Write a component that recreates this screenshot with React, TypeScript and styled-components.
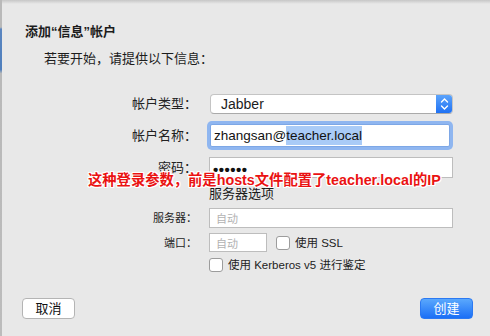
import React from "react";
import styled, { createGlobalStyle } from "styled-components";

const GlobalStyle = createGlobalStyle`
	html, body {
		margin: 0;
		padding: 0;
		background: #e8e8e8;
	}
	* {
		box-sizing: border-box;
	}
`;

const FONT = `"Liberation Sans", "Noto Sans CJK SC", sans-serif`;

const Sheet = styled.div`
	position: relative;
	width: 490px;
	height: 336px;
	overflow: hidden;
	background: #e8e8e8;
	font-family: ${FONT};
	color: #1c1c1c;
	border-left: 2px solid transparent;
	border-image: linear-gradient(to bottom, #b9b9b9 0px, #b9b9b9 28px, #5b86c0 30px, #4f7fbd 70px, #b9b9b9 74px, #bcbcbc 100%) 1;
	&::before {
		content: "";
		position: absolute;
		top: 0;
		left: 0;
		right: 0;
		height: 4px;
		background: linear-gradient(to bottom, #c6c6c6, #e8e8e8);
	}
`;

const Title = styled.h1`
	margin: 0;
	padding: 24px 0 0 23px;
	font-size: 13px;
	line-height: 16px;
	font-weight: 700;
`;

const Intro = styled.p`
	margin: 11px 0 0 42px;
	font-size: 13px;
	line-height: 16px;
`;

const Form = styled.div`
	display: flex;
	flex-direction: column;
	margin-top: 27px;
	padding-right: 37px;
`;

const Row = styled.div<{ $top?: number }>`
	display: grid;
	grid-template-columns: 195px 1fr;
	column-gap: 12px;
	align-items: center;
	margin-top: ${(p) => p.$top ?? 0}px;
`;

const Label = styled.span<{ $small?: boolean }>`
	text-align: right;
	font-size: ${(p) => (p.$small ? 11 : 13)}px;
	line-height: 16px;
	color: #222;
	white-space: nowrap;
`;

const Popup = styled.div`
	position: relative;
	display: flex;
	align-items: center;
	height: 20px;
	margin-left: 1px;
	padding-left: 10px;
	background: #fff;
	border: 1px solid #c4c4c4;
	border-bottom-color: #aaa;
	border-radius: 4px;
	font-size: 14px;
	overflow: hidden;
`;

const Stepper = styled.span`
	position: absolute;
	top: -1px;
	right: -1px;
	bottom: -1px;
	width: 17px;
	display: flex;
	align-items: center;
	justify-content: center;
	background: linear-gradient(to bottom, #5fa6fb, #1c6ff4);
	border-radius: 0 4px 4px 0;
`;

const Field = styled.div<{ $h: number; $w?: number; $focus?: boolean; $small?: boolean }>`
	display: flex;
	align-items: center;
	height: ${(p) => p.$h}px;
	width: ${(p) => (p.$w ? `${p.$w}px` : "auto")};
	margin-left: ${(p) => (p.$focus ? 1 : 0)}px;
	margin-right: ${(p) => (p.$focus ? 3 : 0)}px;
	padding-left: ${(p) => (p.$small ? 6 : 3)}px;
	background: #fff;
	border: 1px solid ${(p) => (p.$focus ? "#7da7e6" : "#bdbdbd")};
	box-shadow: ${(p) => (p.$focus ? "0 0 0 3px #8fb6f0" : "none")};
	border-radius: ${(p) => (p.$focus ? 2 : 0)}px;
	font-size: ${(p) => (p.$small ? 11 : p.$focus ? 13.5 : 14)}px;
	color: #111;
	white-space: nowrap;
`;

const Selected = styled.span`
	background: #a9cbf7;
	padding: 2px 0;
`;

const Placeholder = styled.span`
	color: #b2b2b2;
`;

const Dots = styled.span`
	font-size: 15px;
	letter-spacing: 0.5px;
	font-weight: 700;
	margin-top: 3px;
`;

const Section = styled.div`
	margin: 8px 0 0 207px;
	font-size: 13px;
	line-height: 16px;
`;

const Inline = styled.div`
	display: flex;
	align-items: center;
	gap: 9px;
`;

const Check = styled.label`
	display: flex;
	align-items: center;
	gap: 5px;
	font-size: 11.5px;
	line-height: 14px;
	color: #222;
	&::before {
		content: "";
		width: 12px;
		height: 12px;
		background: #fff;
		border: 1px solid #9c9c9c;
		border-radius: 3px;
	}
`;

const Footer = styled.div`
	display: flex;
	justify-content: space-between;
	padding: 0 17px 0 20px;
	margin-top: 26px;
`;

const Button = styled.button<{ $primary?: boolean }>`
	width: 53px;
	height: 21px;
	padding: 0;
	font-family: ${FONT};
	font-size: 13px;
	line-height: 19px;
	border-radius: 4px;
	color: ${(p) => (p.$primary ? "#fff" : "#111")};
	background: ${(p) => (p.$primary ? "linear-gradient(to bottom, #5aa8fd, #1b6ff6)" : "#fff")};
	border: 1px solid ${(p) => (p.$primary ? "#2b79f2" : "#b4b4b4")};
`;

const Note = styled.div`
	position: absolute;
	left: 86px;
	top: 171px;
	font-family: ${FONT};
	font-size: 14.3px;
	line-height: 18px;
	font-weight: 700;
	color: #ea1212;
	white-space: nowrap;
	text-shadow: 1px 0 0 #fff, -1px 0 0 #fff, 0 1px 0 #fff, 0 -1px 0 #fff, 1px 1px 0 #fff, -1px -1px 0 #fff,
		1px -1px 0 #fff, -1px 1px 0 #fff;
`;

const Arrows = () => (
	<svg width="9" height="14" viewBox="0 0 9 14" fill="none" stroke="#fff" strokeWidth="1.4" strokeLinecap="round">
		<path d="M1.5 5 L4.5 2 L7.5 5" />
		<path d="M1.5 9 L4.5 12 L7.5 9" />
	</svg>
);

const App = () => {
	return (
		<>
			<GlobalStyle />
			<Sheet>
				<Title>添加“信息”帐户</Title>
				<Intro>若要开始，请提供以下信息：</Intro>
				<Form>
					<Row>
						<Label>帐户类型：</Label>
						<Popup>
							Jabber
							<Stepper>
								<Arrows />
							</Stepper>
						</Popup>
					</Row>
					<Row $top={10}>
						<Label>帐户名称：</Label>
						<Field $h={23} $focus>
							zhangsan@<Selected>teacher.local</Selected>
						</Field>
					</Row>
					<Row $top={10}>
						<Label>密码：</Label>
						<Field $h={21}>
							<Dots>••••••</Dots>
						</Field>
					</Row>
					<Section>服务器选项</Section>
					<Row $top={6}>
						<Label $small>服务器：</Label>
						<Field $h={20} $small>
							<Placeholder>自动</Placeholder>
						</Field>
					</Row>
					<Row $top={5}>
						<Label $small>端口：</Label>
						<Inline>
							<Field $h={19} $w={58} $small>
								<Placeholder>自动</Placeholder>
							</Field>
							<Check>使用 SSL</Check>
						</Inline>
					</Row>
					<Row $top={6}>
						<span />
						<Check>使用 Kerberos v5 进行鉴定</Check>
					</Row>
				</Form>
				<Footer>
					<Button>取消</Button>
					<Button $primary>创建</Button>
				</Footer>
				<Note>这种登录参数，前是hosts文件配置了teacher.local的IP</Note>
			</Sheet>
		</>
	);
};

export default App;
